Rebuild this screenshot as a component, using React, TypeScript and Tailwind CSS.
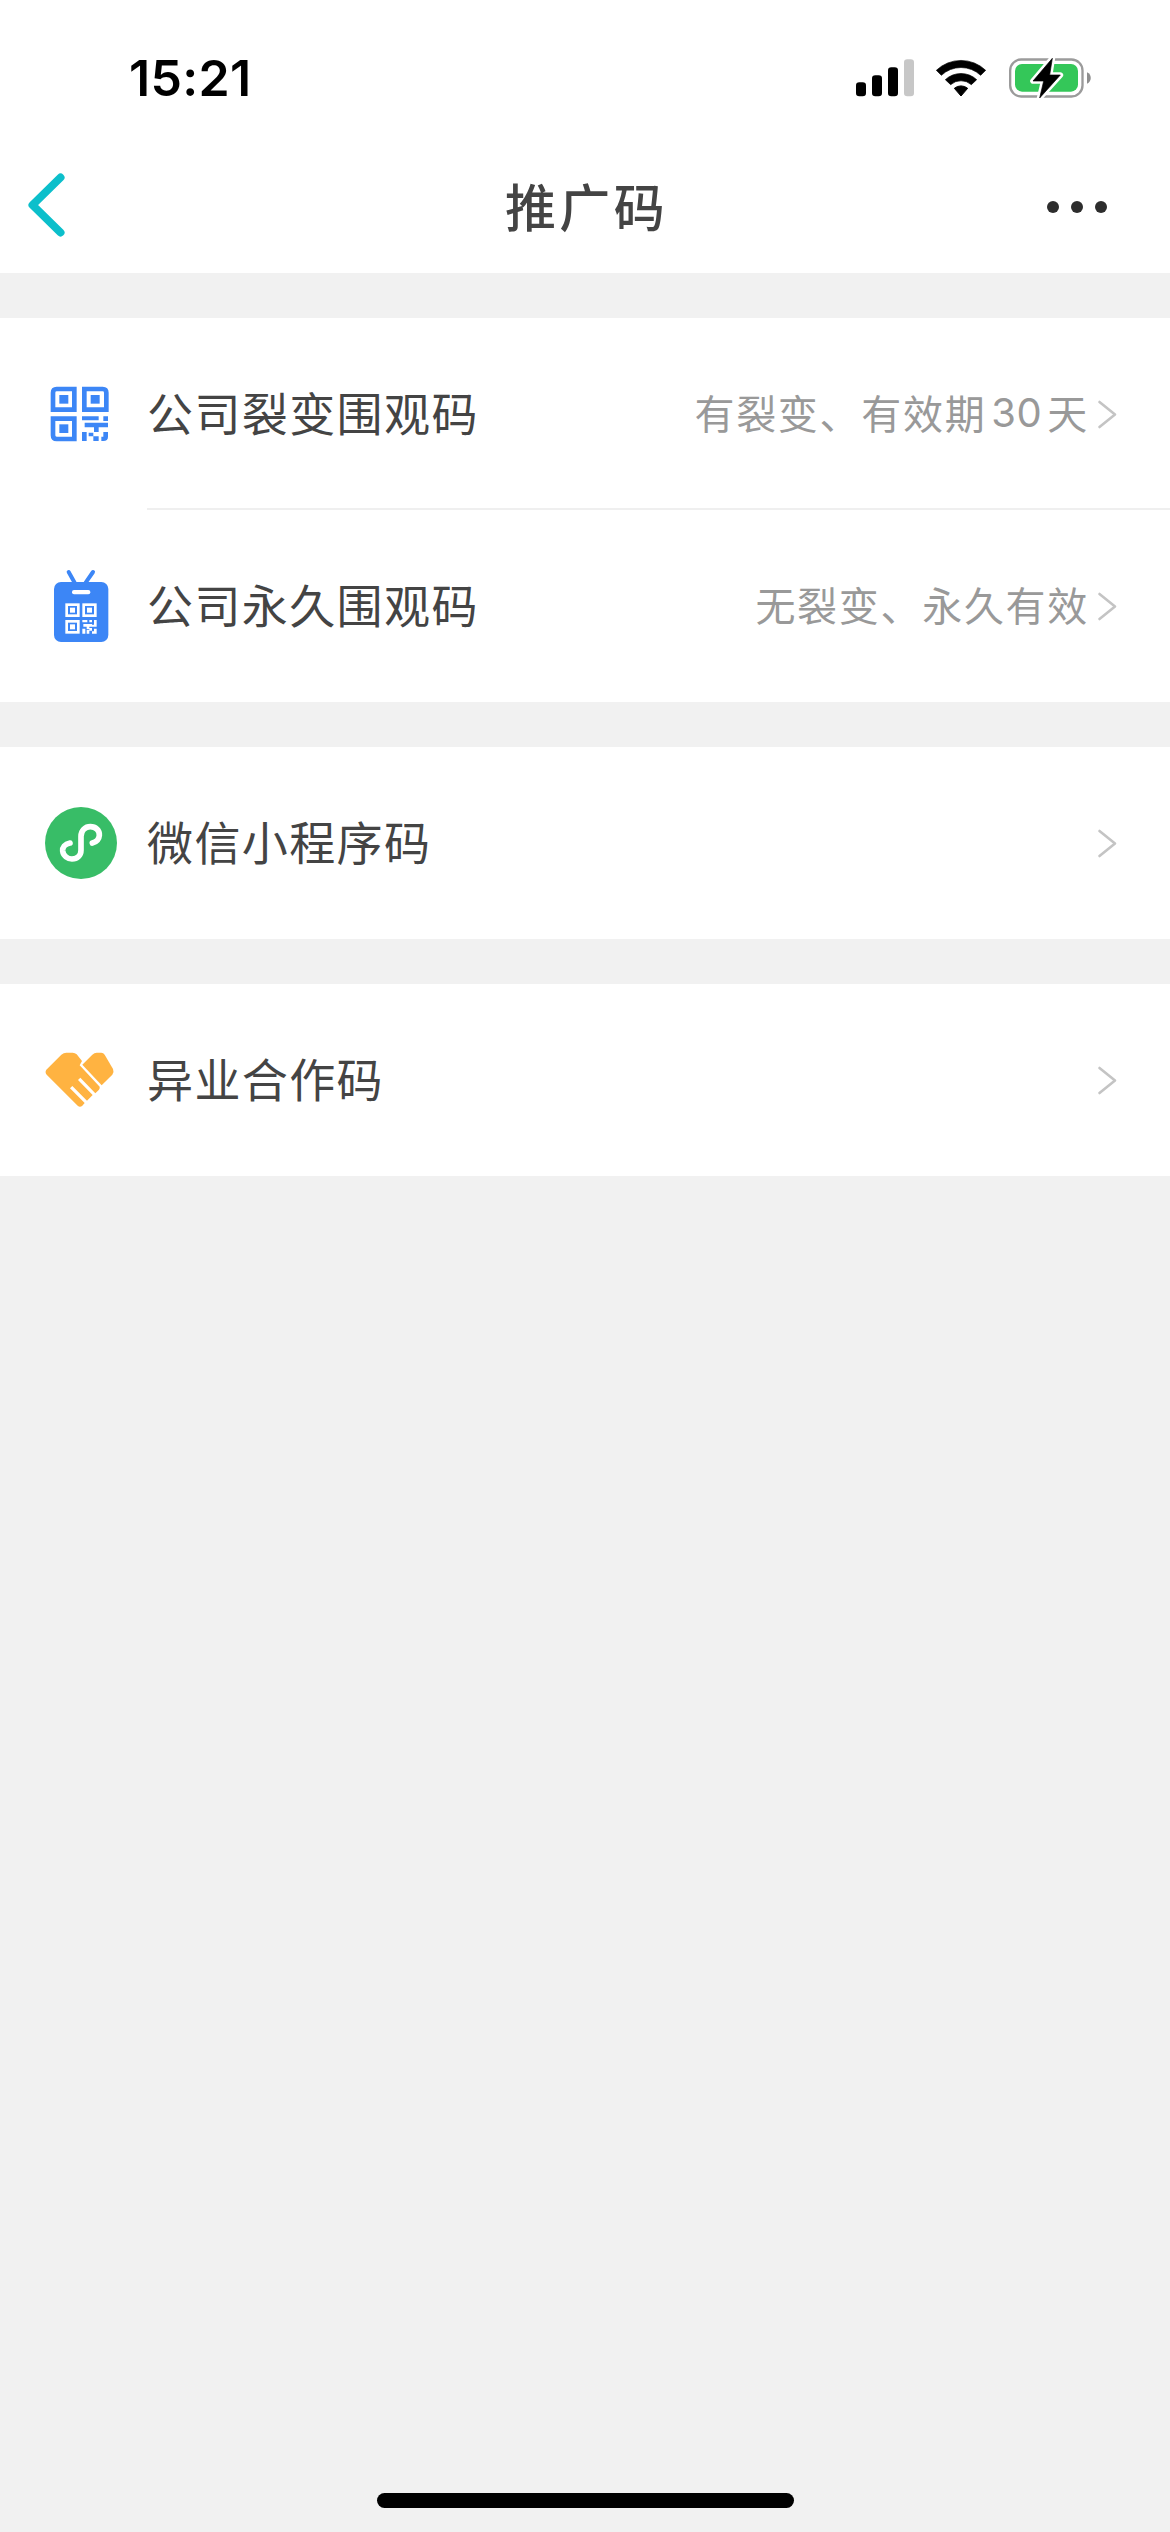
import type { ReactNode } from "react";

const sans = "font-['Noto_Sans_CJK_SC',sans-serif]";

function SignalIcon() {
  return (
    <svg className="h-[38px] w-[58px]" viewBox="0 0 174 114">
      <rect x="0" y="70" width="30" height="42" rx="10" fill="#000" />
      <rect x="48" y="49" width="30" height="63" rx="10" fill="#000" />
      <rect x="96" y="25" width="30" height="87" rx="10" fill="#000" />
      <rect x="144" y="1" width="30" height="111" rx="10" fill="#c7c7c7" />
    </svg>
  );
}

function WifiIcon() {
  return (
    <svg className="h-[38px] w-[50px]" viewBox="0 0 150 114">
      <path d="M1 34 A107 107 0 0 1 149 34 L134 49 A86 86 0 0 0 16 49 Z" fill="#000" stroke="#000" strokeWidth="2" strokeLinejoin="round" />
      <path d="M28 62 A69 69 0 0 1 122 62 L106 77 A47 47 0 0 0 44 77 Z" fill="#000" stroke="#000" strokeWidth="2" strokeLinejoin="round" />
      <path d="M55 88 A31 31 0 0 1 95 88 L75 111 Z" fill="#000" stroke="#000" strokeWidth="3" strokeLinejoin="round" />
    </svg>
  );
}

function BatteryIcon() {
  return (
    <svg className="h-[42px] w-[82px]" viewBox="0 0 246 126">
      <rect x="3.5" y="7.500" width="217" height="111" rx="33" fill="none" stroke="#9b9b9b" strokeWidth="7" />
      <path d="M234 46 C249 52 249 74 234 80 Z" fill="#8e8e8e" />
      <rect x="18" y="21" width="189" height="83" rx="21" fill="#34c759" />
      <path d="M130 4 L72 72 H104 L92 123 L154 54 H122 Z" fill="#000" stroke="#fff" strokeWidth="17" strokeLinejoin="round" />
      <path d="M130 4 L72 72 H104 L92 123 L154 54 H122 Z" fill="#000" stroke="#000" strokeWidth="2" strokeLinejoin="round" />
    </svg>
  );
}

function QrIcon() {
  return (
    <svg className="h-[96px] w-[100px]" viewBox="0 -12 300 288" fill="#3c86f6">
      <g fill="none" stroke="#3c86f6" strokeWidth="14">
        <path d="M80 57 H133 V119 H69 V68 Q69 57 80 57 Z" />
        <path d="M163 57 H218 Q229 57 229 68 V119 H163 Z" />
        <path d="M69 146 H133 V207 H80 Q69 207 69 196 Z" />
      </g>
      <rect x="88" y="75" width="27" height="26" />
      <rect x="182" y="75" width="27" height="26" />
      <rect x="88" y="163" width="27" height="26" />
      <path d="M156 139h50v12h-50zM220 139h14v14h-14zM164 158h70v14h-28v14h-14v-14h-28zM156 186h14v27h-14zM176 188h14v11h-14zM190 199h16v14h-16zM220 186h14v14q0 13 -14 13h-6v-13h6z" />
    </svg>
  );
}

function BadgeIcon() {
  return (
    <svg className="h-[96px] w-[100px]" viewBox="0 -6 300 288">
      <path d="M116 36 L134 68 M189 36 L167 68" stroke="#3c86f6" strokeWidth="12" strokeLinecap="round" fill="none" />
      <rect x="72" y="66" width="163" height="180" rx="21" fill="#3c86f6" />
      <rect x="126" y="90" width="55" height="13" rx="6" fill="#fff" />
      <g fill="none" stroke="#fff" strokeWidth="8">
        <rect x="110" y="134" width="35" height="33" />
        <rect x="161" y="134" width="35" height="33" />
        <rect x="110" y="184" width="35" height="33" />
      </g>
      <g fill="#fff">
        <rect x="120" y="143" width="15" height="15" />
        <rect x="171" y="143" width="15" height="15" />
        <rect x="120" y="193" width="15" height="15" />
        <path d="M157 180h15v7h-15zM178 180h8v7h-8zM192 180h8v14h-8zM160 192h26v8h-8v8h-8v-8h-10zM186 194h14v6h-14zM157 206h9v15h-9zM170 210h8v11h-8zM178 204h8v8h-8zM192 206h8v15h-14v-7h6z" />
      </g>
    </svg>
  );
}

function MiniProgramIcon() {
  return (
    <svg className="h-[96px] w-[100px]" viewBox="0 0 300 288">
      <circle cx="153" cy="144" r="108" fill="#38bd67" />
      <path d="M120 144 C104 147 97 157 98 168 C100 183 113 192 126 192 C142 192 153 181 153 166 V124 C153 106 166 95 181 95 C197 95 209 106 208 121 C207 133 199 141 187 144" fill="none" stroke="#fff" strokeWidth="17" strokeLinecap="round" />
    </svg>
  );
}

function HandshakeIcon() {
  return (
    <svg className="h-[96px] w-[100px]" viewBox="0 6 300 288" fill="#ffb341">
      <path d="M94 74 Q101 68 109 68 H128 Q135 68 140 73 L156 93 L149 106 L209 170 Q210 175 207 179 L196 190 L151 143 L144 150 L188 195 L171 212 L127 168 L120 175 L164 219 L157 227 Q150 233 143 227 L50 134 Q44 126 49 119 Z" />
      <path d="M157 104 L187 74 Q193 68 200 68 H214 Q220 68 224 74 L249 117 Q253 126 247 134 L215 166 Z" />
    </svg>
  );
}

function Chevron() {
  return (
    <svg className="ml-[8px] h-[29px] w-[20px]" viewBox="0 0 20 29" fill="none" stroke="#c4c4c4" strokeWidth="2.600" strokeLinecap="round" strokeLinejoin="round">
      <path d="M2.500 2 L18 14.500 L2.500 27" />
    </svg>
  );
}

function Row({ icon, label, children }: { icon: ReactNode; label: string; children?: ReactNode }) {
  return (
    <div className="flex h-[192px] items-center bg-white pr-[53px] pl-[30px]">
      {icon}
      <span className="mb-[6px] ml-[17px] text-[46px] leading-[60px] tracking-[1.400px] text-[#444]">{label}</span>
      <span className="mb-[5px] ml-auto flex items-center text-[40px] leading-[60px] tracking-[1.700px] text-[#999]">{children}</span>
      <Chevron />
    </div>
  );
}

export default function App() {
  return (
    <div className={`flex h-[2532px] w-[1170px] flex-col bg-[#f1f1f1] ${sans}`}>
      <header className="h-[273px] bg-white">
        <div className="flex h-[156px] items-center pr-[79px] pl-[129px]">
          <span className="font-['Inter',sans-serif] text-[50px] leading-none font-semibold tracking-[0.300px] text-black">15:21</span>
          <div className="ml-auto flex items-center">
            <SignalIcon />
            <div className="ml-[22px] flex"><WifiIcon /></div>
            <div className="ml-[23px] flex"><BatteryIcon /></div>
          </div>
        </div>
        <div className="grid h-[104px] grid-cols-[1fr_auto_1fr] items-center">
          <svg className="mb-[7px] ml-[27px] h-[64px] w-[40px]" viewBox="0 0 40 64" fill="none" stroke="#0cbfcb" strokeWidth="8" strokeLinecap="round" strokeLinejoin="round">
            <path d="M33.500 4.500 L5.500 32 L33.500 59.500" />
          </svg>
          <h1 className="mb-[6px] pl-[3px] text-[51px] leading-[70px] font-medium tracking-[3.300px] text-[#444]">推广码</h1>
          <div className="mr-[63px] mb-[2px] flex gap-[12px] justify-self-end">
            <i className="size-[12px] rounded-full bg-[#2d2d2d]" />
            <i className="size-[12px] rounded-full bg-[#2d2d2d]" />
            <i className="size-[12px] rounded-full bg-[#2d2d2d]" />
          </div>
        </div>
      </header>

      <main className="mt-[45px] flex flex-col gap-[45px]">
        <section className="relative">
          <Row icon={<QrIcon />} label="公司裂变围观码">
            有裂变、有效期
            <span className="mx-[5px] mt-[2px] font-['Inter',sans-serif] text-[40px] tracking-[0.500px]">30</span>天
          </Row>
          <div className="absolute top-[190px] right-0 left-[147px] h-[2px] bg-[#efefef]" />
          <Row icon={<BadgeIcon />} label="公司永久围观码">无裂变、永久有效</Row>
        </section>
        <section>
          <Row icon={<MiniProgramIcon />} label="微信小程序码" />
        </section>
        <section>
          <Row icon={<HandshakeIcon />} label="异业合作码" />
        </section>
      </main>

      <div className="mx-auto mt-auto mb-[24px] h-[15px] w-[417px] rounded-full bg-black" />
    </div>
  );
}
